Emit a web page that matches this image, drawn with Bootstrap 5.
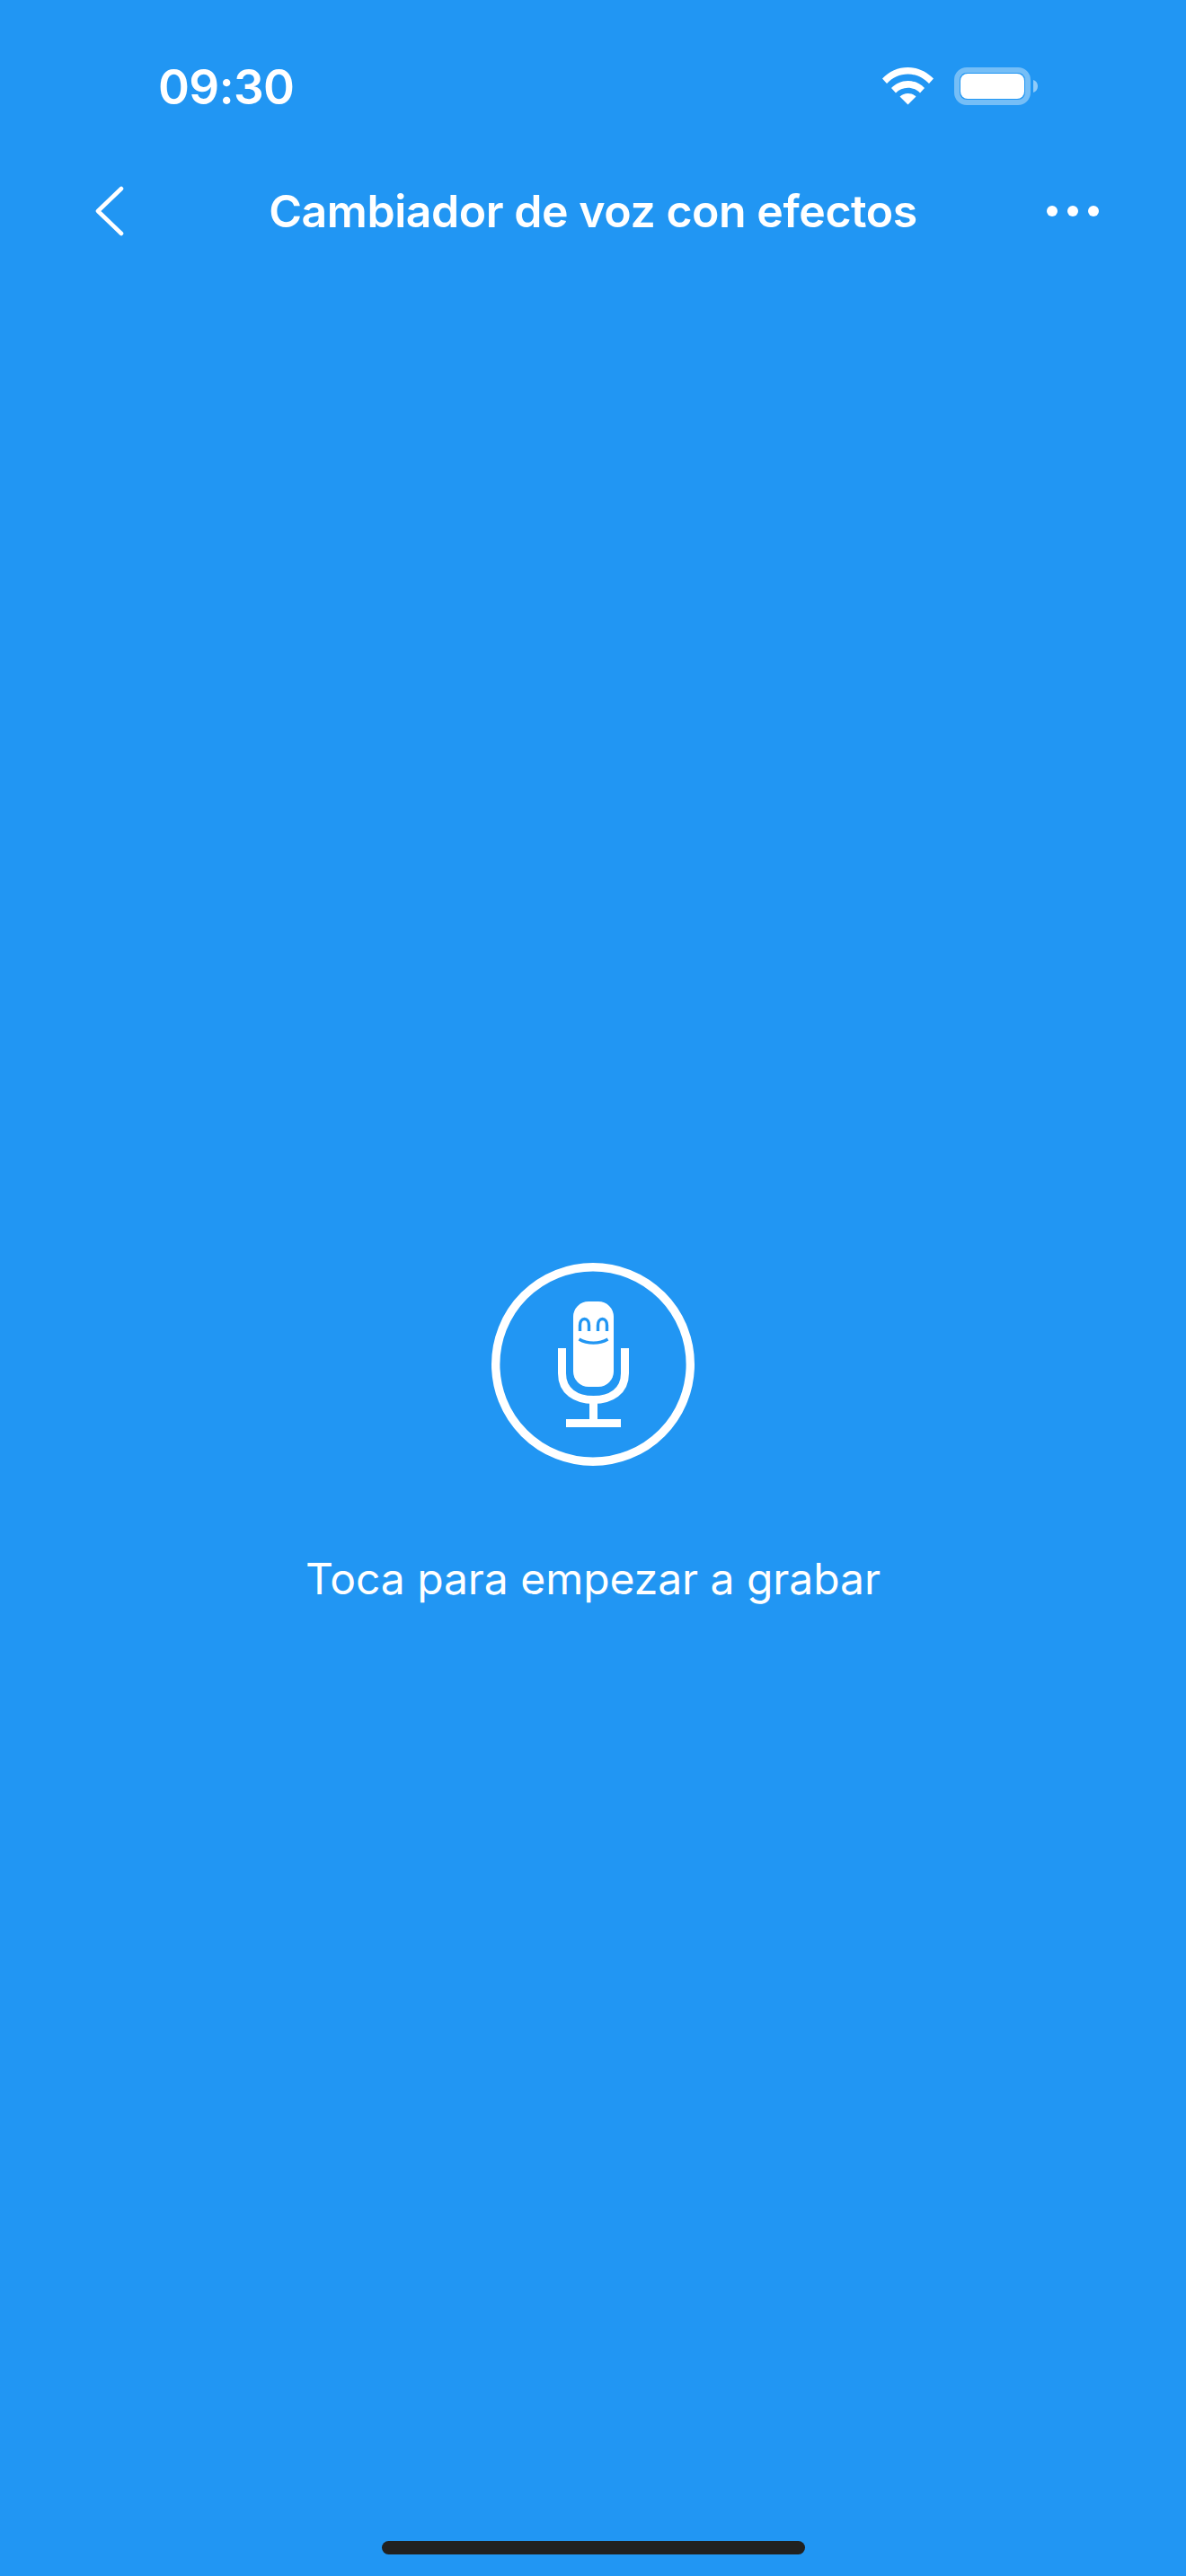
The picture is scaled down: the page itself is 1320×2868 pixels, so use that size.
<!DOCTYPE html>
<html lang="es">
<head>
<meta charset="utf-8">
<title>Cambiador de voz con efectos</title>
<link href="https://cdn.jsdelivr.net/npm/bootstrap@5.3.0/dist/css/bootstrap.min.css" rel="stylesheet">
<style>
html, body { margin: 0; height: 100%; }
body { background: #2196F3; color: #fff; font-family: Inter, "Liberation Sans", sans-serif; }
.phone-screen { height: 2868px; width: 1320px; overflow: hidden; }
.status-strip { height: 192px; padding: 72px 165px 0 176px; align-items: flex-start; }
.clock { font-size: 53px; font-weight: 600; line-height: 50px; letter-spacing: -.6px; }
.status-icons { gap: 23px; padding-top: 3px; }
.status-icons svg { display: block; }
.app-bar { display: grid; grid-template-columns: 1fr auto 1fr; padding: 0 97px; height: 86px; align-items: center; }
.app-title { font-size: 50px; font-weight: 600; line-height: 58px; letter-spacing: -.45px; margin: 0; }
.more-dots { justify-self: end; }
.recorder { margin-top: 1128px; }
.record-btn { background: none; border: 0; padding: 0; display: block; line-height: 0; }
.record-hint { font-size: 48px; font-weight: 400; line-height: 58px; margin: 97px 0 0; letter-spacing: -.05px; }
.home-pill { width: 471px; height: 15px; border-radius: 8px; background: #212121; margin-bottom: 24px; }
</style>
</head>
<body>
<div class="phone-screen d-flex flex-column">
  <div class="status-strip d-flex justify-content-between">
    <span class="clock">09:30</span>
    <div class="status-icons d-flex align-items-start">
      <svg width="57" height="42" viewBox="0 0 57 42" fill="#fff">
        <path d="M0 12.5C7.5 4.6 17.5 0 28.5 0S49.500 4.600 57 12.500L52 18C45.800 11.500 37.500 7.500 28.500 7.500S11.200 11.500 5 18Z"/>
        <path d="M10 23C15 18 21.300 15 28.500 15S42 18 47 23L42 28.500C38.500 25 33.800 22.800 28.500 22.800S18.500 25 15 28.500Z"/>
        <path d="M19.500 32.500C22 30.200 25 29 28.500 29S35 30.200 37.500 32.500L28.500 41.500Z"/>
      </svg>
      <svg width="93" height="42" viewBox="0 0 93 42" fill="none">
        <rect x="3" y="3" width="79" height="36" rx="11" stroke="#fff" stroke-opacity=".38" stroke-width="6"/>
        <rect x="7" y="7" width="71" height="28" rx="8" fill="#fff"/>
        <path d="M88 14C91 15 93 17.500 93 21S91 27 88 28Z" fill="#fff" fill-opacity=".5"/>
      </svg>
    </div>
  </div>

  <nav class="app-bar">
    <svg class="back-arrow" width="42" height="58" viewBox="0 0 42 58" fill="none">
      <path d="M38 4L12 29L38 54" stroke="#fff" stroke-width="4.600" stroke-linecap="round" stroke-linejoin="round"/>
    </svg>
    <h1 class="app-title">Cambiador de voz con efectos</h1>
    <svg class="more-dots" width="58" height="12" viewBox="0 0 58 12" fill="#fff">
      <circle cx="6" cy="6" r="6"/><circle cx="29" cy="6" r="6"/><circle cx="52" cy="6" r="6"/>
    </svg>
  </nav>

  <main class="recorder d-flex flex-column align-items-center text-center">
    <button class="record-btn" type="button" aria-label="Grabar">
      <svg width="226" height="226" viewBox="0 0 226 226" fill="none">
        <circle cx="113" cy="113" r="108.300" stroke="#fff" stroke-width="9.400"/>
        <rect x="91" y="43" width="45" height="95" rx="17" fill="#fff"/>
        <path d="M98.500 76V69.500C98.500 65.500 100.500 62.500 103.500 62.500S108.500 65.500 108.500 69.500V76" stroke="#2196F3" stroke-width="3.400"/>
        <path d="M118.500 76V69.500C118.500 65.500 120.500 62.500 123.500 62.500S128.500 65.500 128.500 69.500V76" stroke="#2196F3" stroke-width="3.400"/>
        <path d="M97.500 85C107 90.500 120 90.500 129.500 85" stroke="#2196F3" stroke-width="3.400"/>
        <path d="M78.500 95V123C78.500 143 94 152.500 113.500 152.500S148.500 143 148.500 123V95" stroke="#fff" stroke-width="9"/>
        <path d="M113.500 152V175" stroke="#fff" stroke-width="9"/>
        <path d="M83 178.500H144" stroke="#fff" stroke-width="9"/>
      </svg>
    </button>
    <p class="record-hint">Toca para empezar a grabar</p>
  </main>

  <div class="home-pill mt-auto mx-auto"></div>
</div>
<script src="https://cdn.jsdelivr.net/npm/bootstrap@5.3.0/dist/js/bootstrap.bundle.min.js"></script>
</body>
</html>
